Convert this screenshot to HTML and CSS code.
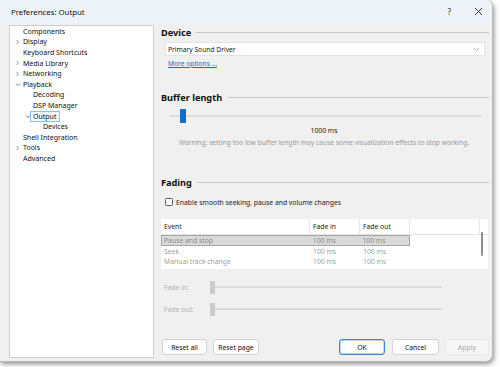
FILE: index.html
```html
<!DOCTYPE html>
<html>
<head>
<meta charset="utf-8">
<link rel="stylesheet" href="styles.css">
</head>
<body>
<div class="window">
  <div class="titlebar">
    <span class="title">Preferences: Output</span>
    <span class="tb-btns"><span class="help">?</span><svg class="close" width="9" height="9" viewBox="0 0 9 9"><path d="M1 1L8 8M8 1L1 8" stroke="#222" stroke-width="0.9" fill="none"/></svg></span>
  </div>
  <div class="main">
    <div class="tree">
      <div class="row l0"><span class="exp"></span><span class="lbl">Components</span></div>
      <div class="row l0"><span class="exp"><svg width="5" height="6" viewBox="0 0 5 6"><path d="M1.5 1L3.5 3L1.5 5" stroke="#777" stroke-width="0.8" fill="none"/></svg></span><span class="lbl">Display</span></div>
      <div class="row l0"><span class="exp"></span><span class="lbl">Keyboard Shortcuts</span></div>
      <div class="row l0"><span class="exp"><svg width="5" height="6" viewBox="0 0 5 6"><path d="M1.5 1L3.5 3L1.5 5" stroke="#777" stroke-width="0.8" fill="none"/></svg></span><span class="lbl">Media Library</span></div>
      <div class="row l0"><span class="exp"><svg width="5" height="6" viewBox="0 0 5 6"><path d="M1.5 1L3.5 3L1.5 5" stroke="#777" stroke-width="0.8" fill="none"/></svg></span><span class="lbl">Networking</span></div>
      <div class="row l0"><span class="exp"><svg width="6" height="5" viewBox="0 0 6 5"><path d="M1 1.5L3 3.5L5 1.5" stroke="#555" stroke-width="0.8" fill="none"/></svg></span><span class="lbl">Playback</span></div>
      <div class="row l1"><span class="exp"></span><span class="lbl">Decoding</span></div>
      <div class="row l1"><span class="exp"></span><span class="lbl">DSP Manager</span></div>
      <div class="row l1"><span class="exp"><svg width="6" height="5" viewBox="0 0 6 5"><path d="M1 1.5L3 3.5L5 1.5" stroke="#555" stroke-width="0.8" fill="none"/></svg></span><span class="lbl sel">Output</span></div>
      <div class="row l2"><span class="exp"></span><span class="lbl">Devices</span></div>
      <div class="row l0"><span class="exp"></span><span class="lbl">Shell Integration</span></div>
      <div class="row l0"><span class="exp"><svg width="5" height="6" viewBox="0 0 5 6"><path d="M1.5 1L3.5 3L1.5 5" stroke="#777" stroke-width="0.8" fill="none"/></svg></span><span class="lbl">Tools</span></div>
      <div class="row l0"><span class="exp"></span><span class="lbl">Advanced</span></div>
    </div>
    <div class="page">
      <div class="sec-head s-device"><span>Device</span></div>
      <div class="combo"><span>Primary Sound Driver</span><svg width="7" height="5" viewBox="0 0 7 5"><path d="M1 1.2L3.5 3.5L6 1.2" stroke="#888" stroke-width="0.7" fill="none"/></svg></div>
      <a class="link">More options ...</a>
      <div class="sec-head s-buffer"><span>Buffer length</span></div>
      <div class="slider main-slider"><div class="track"></div><div class="thumb"></div></div>
      <div class="value">1000 ms</div>
      <div class="warning">Warning: setting too low buffer length may cause some visualization effects to stop working.</div>
      <div class="sec-head s-fading"><span>Fading</span></div>
      <label class="check"><span class="box"></span><span>Enable smooth seeking, pause and volume changes</span></label>
      <div class="table">
        <div class="thead">
          <div class="c c1">Event</div><div class="c c2">Fade in</div><div class="c c3">Fade out</div><div class="c c4"></div>
        </div>
        <div class="trow selrow"><div class="c c1">Pause and stop</div><div class="c c2">100 ms</div><div class="c c3">100 ms</div></div>
        <div class="trow"><div class="c c1">Seek</div><div class="c c2">100 ms</div><div class="c c3">100 ms</div></div>
        <div class="trow"><div class="c c1">Manual track change</div><div class="c c2">100 ms</div><div class="c c3">100 ms</div></div>
        <div class="scroll"></div>
      </div>
      <div class="fade-row r-in"><span class="flabel">Fade in:</span><div class="fslider"><div class="fthumb"></div><div class="ftrack"></div></div></div>
      <div class="fade-row r-out"><span class="flabel">Fade out:</span><div class="fslider"><div class="fthumb"></div><div class="ftrack"></div></div></div>
      <div class="buttons">
        <button class="btn w45">Reset all</button>
        <button class="btn w46 ml6">Reset page</button>
        <span class="spacer"></span>
        <button class="btn w46 ok">OK</button>
        <button class="btn w47 ml7">Cancel</button>
        <button class="btn w44 ml6 disabled">Apply</button>
      </div>
    </div>
  </div>
</div>
</body>
</html>
```

FILE: styles.css
```css
html, body {
  margin: 0;
  padding: 0;
}
body {
  width: 500px;
  height: 367px;
  background: #ffffff;
  font-family: "Noto Sans", "Open Sans", sans-serif;
  font-size: 7px;
  color: #1a1a1a;
  overflow: hidden;
}
.window {
  width: 493px;
  height: 362px;
  background: #f0f0f0;
  border-radius: 0 7px 7px 0;
  box-shadow: 1px 2px 5px rgba(0,0,0,0.45);
  display: flex;
  flex-direction: column;
  overflow: hidden;
  box-sizing: border-box;
  border: 1px solid #b9b9b9;
  border-top: none;
  border-left: none;
}
.titlebar {
  height: 23px;
  flex: 0 0 23px;
  background: #eef3f9;
  display: flex;
  align-items: center;
  padding-left: 11px;
  box-sizing: border-box;
}
.title {
  font-size: 7.8px;
  color: #111;
}
.tb-btns {
  margin-left: auto;
  display: flex;
  align-items: center;
  margin-right: 9px;
}
.help {
  font-size: 8px;
  margin-right: 23px;
  color: #222;
}
.main {
  flex: 1;
  display: flex;
  min-height: 0;
}
.tree {
  margin: 2px 0 3px 9px;
  width: 145px;
  background: #fff;
  border: 1px solid #cfcfcf;
  box-sizing: border-box;
  padding-top: 0;
  font-size: 7px;
}
.row {
  height: 10.6px;
  display: flex;
  align-items: center;
  white-space: nowrap;
}
.row.l0 { padding-left: 1px; }
.row.l1 { padding-left: 11px; }
.row.l2 { padding-left: 21px; }
.exp {
  width: 12px;
  height: 10px;
  display: flex;
  align-items: center;
  justify-content: flex-start;
  padding-left: 4px;
  box-sizing: border-box;
}
.lbl {
  padding: 0;
  line-height: 9px;
  border: 1px solid transparent;
  margin-left: -1px;
  color: #111;
}
.lbl.sel {
  border-color: #8cc0ec;
  background: #f2f8fe;
  margin-left: -3px;
  padding: 0 3px 0 2px;
}
.page {
  flex: 1;
  display: flex;
  flex-direction: column;
  padding: 0 3px 6px 7px;
  min-width: 0;
}
.sec-head {
  display: flex;
  align-items: center;
  height: 12px;
  font-weight: bold;
  font-size: 9.2px;
  color: #111;
}
.sec-head::after {
  content: "";
  flex: 1;
  height: 1px;
  background: #c6c6c6;
  margin-left: 5px;
}
.s-device { margin-top: 3px; }
.s-buffer { margin-top: 22px; }
.s-fading { margin-top: 28px; }
.combo {
  margin: 4px 4px 0 4px;
  height: 14px;
  background: #fff;
  border: 1px solid #e3e3e3;
  box-sizing: border-box;
  display: flex;
  align-items: center;
  padding: 0 4px 0 2px;
  justify-content: space-between;
  font-size: 6.7px;
}
.link {
  margin: 3px 0 0 7px;
  color: #1a6fc9;
  text-decoration: underline;
  font-size: 6.7px;
  line-height: 10px;
  align-self: flex-start;
}
.main-slider {
  margin: 6px 8px 0 9px;
  height: 14px;
  position: relative;
}
.track {
  position: absolute;
  left: 0;
  right: 0;
  top: 6px;
  height: 2px;
  background: #dcdcdc;
}
.thumb {
  position: absolute;
  left: 10px;
  top: 0;
  width: 6px;
  height: 14px;
  background: #0f6cc7;
  border-radius: 1px;
}
.value {
  margin-top: 3px;
  text-align: center;
  line-height: 10px;
  font-size: 6.8px;
  color: #222;
  padding-right: 2px;
}
.warning {
  margin-top: 2px;
  text-align: center;
  line-height: 10px;
  font-size: 6.7px;
  color: #9a9a9a;
  padding-right: 2px;
}
.check {
  margin: 9px 0 0 4px;
  display: flex;
  align-items: center;
  height: 10px;
  font-size: 6.8px;
}
.box {
  width: 8px;
  height: 8px;
  border: 1px solid #555;
  border-radius: 1.5px;
  box-sizing: border-box;
  margin-right: 3px;
  background: #fdfdfd;
}
.table {
  margin-top: 12px;
  height: 50px;
  background: #fff;
  position: relative;
  overflow: hidden;
  font-size: 6.8px;
  margin-right: 1px;
}
.thead {
  display: flex;
  height: 16px;
  border-bottom: 1px solid #e4e4e4;
  box-sizing: border-box;
  color: #222;
}
.thead .c {
  border-right: 1px solid #e6e6e6;
  display: flex;
  align-items: center;
}
.c { box-sizing: border-box; padding-left: 3px; white-space: nowrap; }
.c1 { width: 149px; }
.c2 { width: 50px; }
.c3 { width: 50px; }
.c4 { width: 70px; }
.trow {
  display: flex;
  height: 10.5px;
  align-items: center;
  color: #a0a0a0;
  width: 249px;
  box-sizing: border-box;
}
.trow.selrow {
  background: #d9d9d9;
  border: 1px solid #a6a6a6;
  height: 11px;
  color: #8d8d8d;
}
.trow.selrow .c1 { padding-left: 2px; }
.scroll {
  position: absolute;
  right: 5px;
  top: 13px;
  width: 2px;
  height: 24px;
  background: #8e8e8e;
  border-radius: 1px;
}
.fade-row {
  display: flex;
  align-items: center;
  height: 14px;
  color: #b3b3b3;
  font-size: 6.8px;
}
.r-in { margin-top: 11px; }
.r-out { margin-top: 8px; }
.flabel {
  width: 49px;
  flex: none;
  padding-left: 3px;
  box-sizing: border-box;
}
.fslider {
  display: flex;
  align-items: center;
  flex: none;
  width: 232px;
}
.fthumb {
  width: 5px;
  height: 13px;
  background: #cbcbcb;
}
.ftrack {
  flex: 1;
  height: 2px;
  background: #dadada;
}
.buttons {
  margin-top: auto;
  display: flex;
  align-items: center;
  padding-left: 1px;
}
.spacer { flex: 1; }
.btn {
  height: 16px;
  box-sizing: border-box;
  border: 1px solid #d2d2d2;
  border-radius: 3px;
  background: #fdfdfd;
  font-family: "Noto Sans", "Open Sans", sans-serif;
  font-size: 6.8px;
  color: #111;
  padding: 0;
  margin: 0;
}
.w44 { width: 44px; }
.w45 { width: 45px; }
.w46 { width: 46px; }
.w47 { width: 47px; }
.ml6 { margin-left: 6px; }
.ml7 { margin-left: 7px; }
.btn.ok {
  border: 1px solid #3a86cc;
  box-shadow: inset 0 0 0 0.5px #7fb2e0;
}
.btn.disabled {
  background: #f6f6f6;
  border-color: #e6e6e6;
  color: #a8a8a8;
}
```
